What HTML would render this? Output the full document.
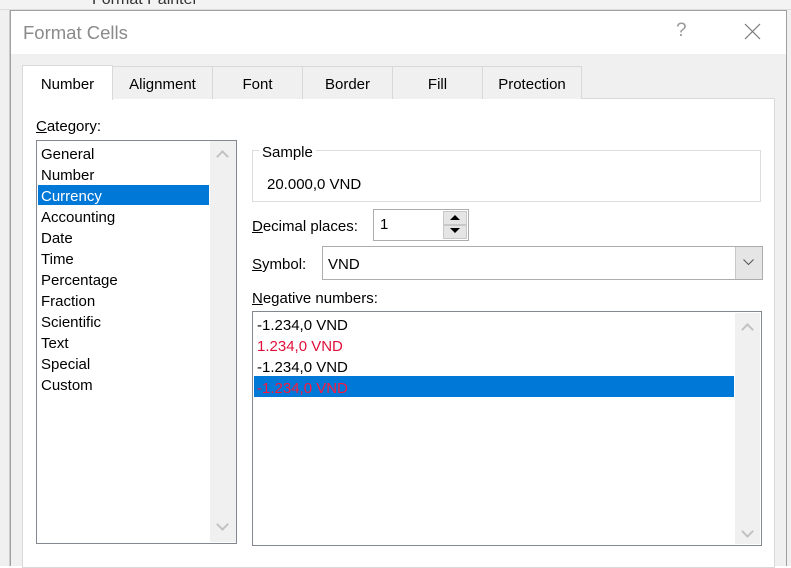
<!DOCTYPE html><html><head><style>
*{box-sizing:border-box;margin:0;padding:0}
body{width:791px;height:566px;overflow:hidden;background:#fff;font-family:"Liberation Sans",sans-serif;font-size:15px;color:#000;position:relative}
.a{position:absolute}
.u{text-decoration:underline}
.tab{position:absolute;top:66px;height:33px;border:1px solid #d9d9d9;border-bottom:none;background:#f0f0f0;text-align:center;line-height:36px}
.li{position:absolute;left:41px;height:21px;line-height:23px}
.sb{position:absolute;background:#f0f0f0}
.chev{position:absolute;width:9px;height:9px;border-left:2px solid #c2c2c2;border-top:2px solid #c2c2c2}
</style></head><body>
<div class="a" style="left:0;top:0;width:791px;height:10px;background:#f3f3f3;border-bottom:1px solid #ddd"></div>
<div class="a" style="left:92px;top:-9px;font-size:16px;color:#333">Format Painter</div>
<div class="a" style="left:0;top:10px;width:10px;height:556px;background:#f0f0f0;border-right:1px solid #ccc"></div>
<div class="a" style="left:786px;top:10px;width:5px;height:556px;background:#f0f0f0;border-left:1px solid #ccc"></div>
<div class="a" style="left:10px;top:10px;width:777px;height:556px;background:#f0f0f0;border:1px solid #a0a0a0;border-bottom:none"></div>
<div class="a" style="left:11px;top:11px;width:775px;height:43px;background:#fff"></div>
<div class="a" style="left:23px;top:22px;font-size:18.5px;color:#8a8a8a">Format Cells</div>
<div class="a" style="left:676px;top:20px;font-size:19px;color:#999">?</div>
<svg class="a" style="left:744px;top:23px" width="17" height="17"><path d="M1 1L16 16M16 1L1 16" stroke="#777" stroke-width="1.2"/></svg>
<div class="a" style="left:22px;top:98px;width:753px;height:470px;background:#fff;border:1px solid #d9d9d9"></div>
<div class="tab" style="left:22px;top:65px;width:91px;height:35px;background:#fff;line-height:37px">Number</div>
<div class="tab" style="left:112px;width:101px">Alignment</div>
<div class="tab" style="left:212px;width:91px">Font</div>
<div class="tab" style="left:302px;width:91px">Border</div>
<div class="tab" style="left:392px;width:91px">Fill</div>
<div class="tab" style="left:482px;width:100px">Protection</div>
<div class="a" style="left:36px;top:118px"><span class="u">C</span>ategory:</div>
<div class="a" style="left:36px;top:140px;width:201px;height:404px;border:1px solid #828790"></div>
<div class="sb" style="left:210px;top:141px;width:26px;height:401px"></div>
<div class="chev" style="left:218px;top:152px;transform:rotate(45deg)"></div>
<div class="chev" style="left:218px;top:520px;transform:rotate(225deg)"></div>
<div class="a" style="left:38px;top:185px;width:171px;height:20px;background:#0078d7"></div>
<div class="li" style="top:143px">General</div>
<div class="li" style="top:164px">Number</div>
<div class="li" style="top:185px;color:#fff">Currency</div>
<div class="li" style="top:206px">Accounting</div>
<div class="li" style="top:227px">Date</div>
<div class="li" style="top:248px">Time</div>
<div class="li" style="top:269px">Percentage</div>
<div class="li" style="top:290px">Fraction</div>
<div class="li" style="top:311px">Scientific</div>
<div class="li" style="top:332px">Text</div>
<div class="li" style="top:353px">Special</div>
<div class="li" style="top:374px">Custom</div>
<div class="a" style="left:252px;top:150px;width:509px;height:52px;border:1px solid #dcdcdc"></div>
<div class="a" style="left:259px;top:144px;background:#fff;padding:0 3px">Sample</div>
<div class="a" style="left:267px;top:176px">20.000,0 VND</div>
<div class="a" style="left:252px;top:218px"><span class="u">D</span>ecimal places:</div>
<div class="a" style="left:373px;top:209px;width:96px;height:32px;border:1px solid #adadad"></div>
<div class="a" style="left:380px;top:216px">1</div>
<div class="a" style="left:443px;top:211px;width:24px;height:14px;background:#e5e5e5;border:1px solid #c8c8c8"></div>
<div class="a" style="left:443px;top:225px;width:24px;height:14px;background:#e5e5e5;border:1px solid #c8c8c8"></div>
<svg class="a" style="left:449px;top:214px" width="12" height="24"><path d="M1 6L6 1L11 6Z M1 14L6 19L11 14Z" fill="#000"/></svg>
<div class="a" style="left:252px;top:256px"><span class="u">S</span>ymbol:</div>
<div class="a" style="left:322px;top:246px;width:441px;height:34px;border:1px solid #adadad"></div>
<div class="a" style="left:328px;top:256px">VND</div>
<div class="a" style="left:735px;top:247px;width:27px;height:32px;background:#e5e5e5;border-left:1px solid #c8c8c8"></div>
<svg class="a" style="left:743px;top:259px" width="11" height="7"><path d="M0.5 0.5L5.5 5.5L10.5 0.5" stroke="#555" fill="none"/></svg>
<div class="a" style="left:252px;top:290px"><span class="u">N</span>egative numbers:</div>
<div class="a" style="left:252px;top:311px;width:510px;height:235px;border:1px solid #828790"></div>
<div class="sb" style="left:735px;top:313px;width:25px;height:231px"></div>
<div class="chev" style="left:743px;top:325px;transform:rotate(45deg)"></div>
<div class="chev" style="left:743px;top:527px;transform:rotate(225deg)"></div>
<div class="a" style="left:254px;top:376px;width:480px;height:21px;background:#0078d7"></div>
<div class="li" style="left:257px;top:314px">-1.234,0 VND</div>
<div class="li" style="left:257px;top:335px;color:#e0103a">1.234,0 VND</div>
<div class="li" style="left:257px;top:356px">-1.234,0 VND</div>
<div class="li" style="left:257px;top:377px;color:#ff1a3c">-1.234,0 VND</div>
</body></html>
